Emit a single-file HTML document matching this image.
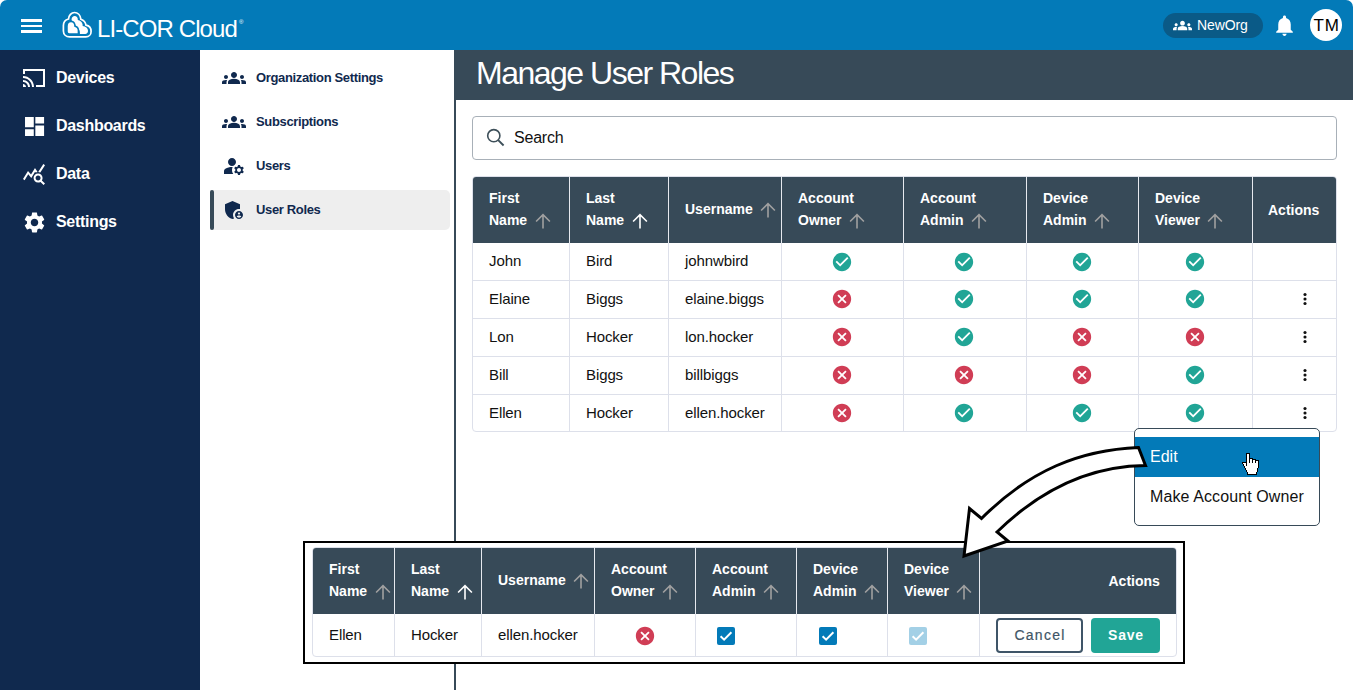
<!DOCTYPE html>
<html><head><meta charset="utf-8">
<style>
*{box-sizing:border-box;margin:0;padding:0}
html,body{width:1353px;height:690px;overflow:hidden;background:#fff;font-family:"Liberation Sans",sans-serif}
.a{position:absolute;display:block}
.t{position:absolute;white-space:nowrap}
.nv{position:absolute;left:56px;color:#fff;font-weight:bold;font-size:16px;line-height:20px;letter-spacing:-0.3px}
.si{position:absolute;left:256px;color:#10294e;font-weight:bold;font-size:13px;line-height:20px;letter-spacing:-0.35px}
.th{position:absolute;color:#fff;font-weight:bold;font-size:14px;line-height:22.5px;white-space:nowrap}
.td{position:absolute;color:#111;font-size:15px;line-height:38px;white-space:nowrap;letter-spacing:-0.1px}
</style></head>
<body>

<div class="a" style="left:0;top:0;width:1353px;height:50px;background:#037ab8;border-radius:7px 7px 0 0"></div>
<div class="a" style="left:21px;top:19px;width:21px;height:2.6px;background:#fff"></div>
<div class="a" style="left:21px;top:24.6px;width:21px;height:2.6px;background:#fff"></div>
<div class="a" style="left:21px;top:30.2px;width:21px;height:2.6px;background:#fff"></div>
<svg class="a" style="left:58px;top:8px" width="40" height="34" viewBox="0 0 40 34">
<path d="M11.6 28.9H27.8C31 28.9 33.1 26.4 33.1 23.4 33.1 20.4 31 17.8 28 17.2 27.6 14.6 25.6 12.3 22.9 11.3 22.4 7.3 19.7 4.5 16.6 4.5 13.3 4.5 10.8 7.5 10.5 11 7.5 11.8 5.4 14.4 5.4 17.6V23C5.4 26.4 8 28.9 11.6 28.9Z" fill="none" stroke="#fff" stroke-width="1.7"/>
<path fill="#fff" d="M13.6 11.3C13.6 9.4 15 8 16.7 8 18.5 8 19.8 9.5 19.8 11.3 19.8 11.6 19.8 11.9 19.7 12.1 22.2 12.3 24.2 14.1 24.6 16.6 24.7 17.1 24.7 17.5 24.6 18 27.6 18.2 30 20.3 30 23 30 24.6 28.8 25.9 27.2 25.9H21.9C21.9 25.9 22 23.7 21.3 22 20.5 20 19 19.3 18 19 17.6 16.1 16 14 13.6 12.3Z"/>
<path fill="#fff" stroke="#037ab8" stroke-width="1.5" d="M9 18.2C9 15.6 10.7 13.5 13 13.5 15.3 13.5 16.9 15.6 17 18.2 18.9 18.5 20.4 20.3 20.4 22.6V25.9H11.3C10 25.9 9 24.9 9 23.6Z"/>
</svg>
<div class="t" style="left:97px;top:15px;font-size:24px;line-height:28px;color:#fff;letter-spacing:-0.9px">LI-COR Cloud</div>
<div class="t" style="left:239px;top:19px;font-size:6px;line-height:7px;color:#fff">&reg;</div>
<div class="a" style="left:1163px;top:13px;width:100px;height:24.5px;background:#0a5a87;border-radius:13px"></div>
<svg class="a" style="left:1173.3px;top:15.6px" width="19" height="19" viewBox="0 0 24 24"><path fill="#fff" d="M12 12.75c1.63 0 3.07.39 4.24.9 1.08.48 1.76 1.56 1.76 2.73V18H6v-1.61c0-1.18.68-2.26 1.76-2.73 1.17-.52 2.61-.91 4.24-.91zM4 13c1.1 0 2-.9 2-2s-.9-2-2-2-2 .9-2 2 .9 2 2 2zm1.13 1.1c-.37-.06-.74-.1-1.130-.1-.99 0-1.93.21-2.78.58C.48 14.9 0 15.62 0 16.43V18h4.5v-1.610c0-.83.23-1.61.63-2.29zM20 13c1.1 0 2-.9 2-2s-.9-2-2-2-2 .9-2 2 .9 2 2 2zm4 3.43c0-.81-.48-1.53-1.22-1.85-.85-.37-1.79-.58-2.78-.58-.39 0-.76.04-1.13.1.4.68.63 1.46.63 2.29V18H24v-1.57zM12 6c1.66 0 3 1.34 3 3s-1.34 3-3 3-3-1.34-3-3 1.34-3 3-3z"/></svg>
<div class="t" style="left:1197px;top:16px;font-size:14px;line-height:18px;color:#fff;letter-spacing:-0.1px">NewOrg</div>
<svg class="a" style="left:1272px;top:12.5px" width="25" height="25" viewBox="0 0 24 24"><path fill="#fff" d="M12 22c1.1 0 2-.9 2-2h-4c0 1.1.89 2 2 2zm6-6v-5c0-3.07-1.64-5.64-4.5-6.32V4c0-.83-.67-1.5-1.5-1.5s-1.5.67-1.5 1.5v.68C7.63 5.36 6 7.92 6 11v5l-2 2v1h16v-1l-2-2z"/></svg>
<div class="a" style="left:1310px;top:8.5px;width:32px;height:32px;border-radius:50%;background:#fff"></div>
<div class="t" style="left:1313.5px;top:15px;font-size:17px;line-height:22px;color:#000;letter-spacing:0.9px">TM</div>
<div class="a" style="left:0;top:50px;width:200px;height:640px;background:#10294e"></div>
<svg class="a" style="left:21.6px;top:66px" width="24" height="24" viewBox="0 0 24 24"><path fill="#fff" d="M23 3H1v5h2V5h18v14h-7v2h9V3zM1 18v3h3c0-1.66-1.34-3-3-3zm0-4v2c2.76 0 5 2.24 5 5h2c0-3.870-3.13-7-7-7zm0-4v2c4.97 0 9 4.03 9 9h2c0-6.08-4.93-11-11-11z"/></svg>
<svg class="a" style="left:21.5px;top:114px" width="25" height="25" viewBox="0 0 24 24"><path fill="#fff" d="M2.9 12.7h8.4V2.8H2.9zm0 8.5h8.4v-6.6H2.9zm9.9 0h8.4V11h-8.4zm0-18.4v6.4h8.4V2.8z"/></svg>
<svg class="a" style="left:21.9px;top:162.4px" width="24" height="24" viewBox="0 0 24 24"><path fill="#fff" d="M19.88,18.47c0.44-0.7,0.7-1.51,0.7-2.39c0-2.49-2.01-4.5-4.5-4.5s-4.5,2.01-4.5,4.5s2.01,4.5,4.49,4.5c0.88,0,1.7-0.26,2.39-0.7L21.58,23L23,21.58L19.88,18.47z M16.08,18.58c-1.38,0-2.5-1.12-2.5-2.5c0-1.38,1.12-2.5,2.5-2.5s2.5,1.12,2.5,2.5C18.58,17.46,17.46,18.58,16.08,18.58z M15.72,10.08c-0.74,0.02-1.45,0.18-2.1,0.45l-0.55-0.83l-3.8,6.18l-3.01-3.52l-3.63,5.81L1,17l5-8l3,3.5L13,6C13,6,15.72,10.08,15.72,10.08z M18.31,10.58c-0.64-0.28-1.33-0.45-2.05-0.49c0,0,5.12-8.09,5.12-8.09L23,3.18L18.31,10.58z"/></svg>
<svg class="a" style="left:21.5px;top:209.5px" width="25" height="25" viewBox="0 0 24 24"><path fill="#fff" d="M19.14,12.94c0.04-0.3,0.06-0.61,0.06-0.94c0-0.32-0.02-0.64-0.07-0.94l2.03-1.58c0.18-0.14,0.23-0.41,0.12-0.61 l-1.92-3.32c-0.12-0.22-0.37-0.29-0.59-0.22l-2.39,0.96c-0.5-0.38-1.03-0.7-1.62-0.94L14.4,2.81c-0.04-0.24-0.24-0.41-0.48-0.41 h-3.84c-0.24,0-0.43,0.17-0.47,0.41L9.25,5.35C8.66,5.590,8.12,5.92,7.63,6.29L5.24,5.33c-0.22-0.08-0.47,0-0.59,0.22L2.74,8.87 C2.62,9.08,2.66,9.34,2.86,9.48l2.03,1.58C4.84,11.36,4.8,11.69,4.8,12s0.02,0.64,0.07,0.94l-2.03,1.58 c-0.18,0.14-0.23,0.41-0.12,0.61l1.92,3.32c0.12,0.22,0.37,0.29,0.59,0.22l2.39-0.96c0.5,0.38,1.03,0.7,1.62,0.94l0.36,2.54 c0.05,0.24,0.24,0.41,0.48,0.41h3.84c0.24,0,0.44-0.17,0.47-0.41l0.36-2.54c0.59-0.24,1.13-0.56,1.62-0.94l2.39,0.96 c0.22,0.08,0.47,0,0.59-0.22l1.92-3.32c0.12-0.22,0.07-0.47-0.12-0.61L19.14,12.94z M12,15.6c-1.98,0-3.6-1.62-3.6-3.6 s1.62-3.6,3.6-3.6s3.6,1.62,3.6,3.6S13.98,15.6,12,15.6z"/></svg>
<div class="nv" style="top:68px">Devices</div>
<div class="nv" style="top:116px">Dashboards</div>
<div class="nv" style="top:164px">Data</div>
<div class="nv" style="top:212px">Settings</div>
<div class="a" style="left:210px;top:190px;width:240px;height:40px;background:#eeeeee;border-radius:0 5px 5px 0"></div>
<div class="a" style="left:210px;top:190px;width:3.5px;height:40px;background:#374a58;border-radius:2px"></div>
<svg class="a" style="left:222px;top:66px" width="24" height="24" viewBox="0 0 24 24"><path fill="#10294e" d="M12 12.75c1.63 0 3.07.39 4.24.9 1.08.48 1.76 1.56 1.76 2.73V18H6v-1.61c0-1.18.68-2.26 1.76-2.73 1.17-.52 2.61-.91 4.24-.91zM4 13c1.1 0 2-.9 2-2s-.9-2-2-2-2 .9-2 2 .9 2 2 2zm1.13 1.1c-.37-.06-.74-.1-1.13-.1-.99 0-1.93.21-2.78.58C.48 14.9 0 15.62 0 16.43V18h4.5v-1.61c0-.83.23-1.61.63-2.29zM20 13c1.1 0 2-.9 2-2s-.9-2-2-2-2 .9-2 2 .9 2 2 2zm4 3.43c0-.81-.48-1.53-1.22-1.85-.85-.37-1.790-.58-2.78-.58-.39 0-.76.04-1.13.1.4.68.63 1.46.63 2.29V18H24v-1.57zM12 6c1.66 0 3 1.34 3 3s-1.34 3-3 3-3-1.34-3-3 1.34-3 3-3z"/></svg>
<svg class="a" style="left:222px;top:110px" width="24" height="24" viewBox="0 0 24 24"><path fill="#10294e" d="M12 12.75c1.63 0 3.07.39 4.24.9 1.08.48 1.76 1.56 1.76 2.73V18H6v-1.61c0-1.18.68-2.26 1.76-2.73 1.17-.52 2.61-.91 4.24-.91zM4 13c1.1 0 2-.9 2-2s-.9-2-2-2-2 .9-2 2 .9 2 2 2zm1.13 1.1c-.37-.06-.74-.1-1.13-.1-.99 0-1.93.21-2.78.58C.48 14.9 0 15.62 0 16.43V18h4.5v-1.61c0-.83.23-1.61.63-2.29zM20 13c1.1 0 2-.9 2-2s-.9-2-2-2-2 .9-2 2 .9 2 2 2zm4 3.43c0-.81-.48-1.53-1.22-1.85-.85-.37-1.790-.58-2.78-.58-.39 0-.76.04-1.13.1.4.68.63 1.46.63 2.29V18H24v-1.57zM12 6c1.66 0 3 1.34 3 3s-1.34 3-3 3-3-1.34-3-3 1.34-3 3-3z"/></svg>
<svg class="a" style="left:222px;top:154px" width="24" height="24" viewBox="0 0 24 24"><path fill="#10294e" d="M10,12c2.21,0,4-1.79,4-4s-1.79-4-4-4S6,5.79,6,8S7.79,12,10,12z M10.67,13.02C10.45,13.01,10.23,13,10,13c-2.42,0-4.68,0.67-6.61,1.82C2.51,15.34,2,16.32,2,17.35V20h9.26C10.47,18.87,10,17.49,10,16C10,14.93,10.25,13.93,10.67,13.02z M20.75,16c0-0.22-0.03-0.42-0.06-0.63l1.14-1.01l-1-1.73l-1.45,0.49c-0.32-0.27-0.68-0.48-1.08-0.63L18,11h-2l-0.3,1.490c-0.4,0.15-0.76,0.36-1.08,0.63l-1.45-0.49l-1,1.73l1.14,1.01c-0.03,0.21-0.06,0.41-0.06,0.63s0.03,0.42,0.06,0.63l-1.14,1.01l1,1.73l1.45-0.49c0.32,0.27,0.68,0.48,1.08,0.63L16,21h2l0.3-1.49c0.4-0.15,0.76-0.36,1.08-0.63l1.45,0.49l1-1.73l-1.14-1.01C20.72,16.42,20.75,16.22,20.75,16z M17,18c-1.1,0-2-0.9-2-2s0.9-2,2-2s2,0.9,2,2S18.1,18,17,18z"/></svg>
<svg class="a" style="left:222px;top:198px" width="24" height="24" viewBox="0 0 24 24"><path fill="#10294e" d="M17,11c0.34,0,0.67,0.04,1,0.09V6.27L10.5,3L3,6.27v4.91c0,4.54,3.2,8.79,7.5,9.82c0.55-0.13,1.08-0.32,1.6-0.55 C11.41,19.47,11,18.28,11,17C11,13.69,13.69,11,17,11z M17,13c-2.21,0-4,1.79-4,4c0,2.21,1.79,4,4,4s4-1.79,4-4 C21,14.79,19.21,13,17,13z M17,14.38c0.62,0,1.12,0.51,1.12,1.12s-0.51,1.12-1.12,1.12s-1.12-0.51-1.12-1.12S16.38,14.38,17,14.38z M17,19.75c-0.93,0-1.74-0.46-2.24-1.17c0.05-0.72,1.51-1.08,2.24-1.08s2.190,0.36,2.24,1.08C18.74,19.29,17.93,19.750,17,19.75z"/></svg>
<div class="si" style="top:68px">Organization Settings</div>
<div class="si" style="top:112px">Subscriptions</div>
<div class="si" style="top:156px">Users</div>
<div class="si" style="top:200px">User Roles</div>
<div class="a" style="left:454px;top:50px;width:2px;height:640px;background:#374a58"></div>
<div class="a" style="left:456px;top:50px;width:897px;height:50px;background:#374a58"></div>
<div class="t" style="left:476px;top:54px;font-size:32px;line-height:38px;color:#fff;letter-spacing:-1.5px">Manage User Roles</div>
<div class="a" style="left:472px;top:116px;width:865px;height:44px;border:1px solid #a8b0b8;border-radius:4px"></div>
<svg class="a" style="left:484px;top:126px" width="24" height="24" viewBox="0 0 24 24"><circle cx="9.8" cy="9.7" r="6.1" fill="none" stroke="#3d4f59" stroke-width="1.6"/><path d="M14.2 14.1L19.6 19.5" stroke="#3d4f59" stroke-width="1.9"/></svg>
<div class="t" style="left:514px;top:127.5px;font-size:16px;line-height:20px;color:#111;letter-spacing:-0.2px">Search</div>
<div class="a" style="left:472px;top:176px;width:865px;height:256px;border:1px solid #dde0ea;border-radius:4px;overflow:hidden"><div class="a" style="left:-1px;top:-1px;width:865px;height:67px;background:#374a58"></div></div>
<div class="a" style="left:569px;top:176px;width:1px;height:67px;background:#e6e9ee"></div>
<div class="a" style="left:569px;top:243px;width:1px;height:189px;background:#dde0ea"></div>
<div class="a" style="left:668px;top:176px;width:1px;height:67px;background:#e6e9ee"></div>
<div class="a" style="left:668px;top:243px;width:1px;height:189px;background:#dde0ea"></div>
<div class="a" style="left:781px;top:176px;width:1px;height:67px;background:#e6e9ee"></div>
<div class="a" style="left:781px;top:243px;width:1px;height:189px;background:#dde0ea"></div>
<div class="a" style="left:903px;top:176px;width:1px;height:67px;background:#e6e9ee"></div>
<div class="a" style="left:903px;top:243px;width:1px;height:189px;background:#dde0ea"></div>
<div class="a" style="left:1026px;top:176px;width:1px;height:67px;background:#e6e9ee"></div>
<div class="a" style="left:1026px;top:243px;width:1px;height:189px;background:#dde0ea"></div>
<div class="a" style="left:1138px;top:176px;width:1px;height:67px;background:#e6e9ee"></div>
<div class="a" style="left:1138px;top:243px;width:1px;height:189px;background:#dde0ea"></div>
<div class="a" style="left:1252px;top:176px;width:1px;height:67px;background:#e6e9ee"></div>
<div class="a" style="left:1252px;top:243px;width:1px;height:189px;background:#dde0ea"></div>
<div class="a" style="left:472px;top:280px;width:865px;height:1px;background:#dde0ea"></div>
<div class="a" style="left:472px;top:318px;width:865px;height:1px;background:#dde0ea"></div>
<div class="a" style="left:472px;top:356px;width:865px;height:1px;background:#dde0ea"></div>
<div class="a" style="left:472px;top:394px;width:865px;height:1px;background:#dde0ea"></div>
<div class="th" style="left:489px;top:186.5px">First<br>Name</div>
<svg class="a" style="left:534.625px;top:212.8px" width="16" height="16" viewBox="0 0 16 16"><path d="M8 15.4V2M1.1 8.5L8 1.6l6.9 6.9" stroke="#a0a0a0" stroke-width="1.6" fill="none"/></svg>
<div class="th" style="left:586px;top:186.5px">Last<br>Name</div>
<svg class="a" style="left:631.625px;top:212.8px" width="16" height="16" viewBox="0 0 16 16"><path d="M8 15.4V2M1.1 8.5L8 1.6l6.9 6.9" stroke="#fff" stroke-width="1.6" fill="none"/></svg>
<div class="th" style="left:685px;top:197.75px">Username</div>
<svg class="a" style="left:760.1875px;top:201.8px" width="16" height="16" viewBox="0 0 16 16"><path d="M8 15.4V2M1.1 8.5L8 1.6l6.9 6.9" stroke="#a0a0a0" stroke-width="1.6" fill="none"/></svg>
<div class="th" style="left:798px;top:186.5px">Account<br>Owner</div>
<svg class="a" style="left:849.0625px;top:212.8px" width="16" height="16" viewBox="0 0 16 16"><path d="M8 15.4V2M1.1 8.5L8 1.6l6.9 6.9" stroke="#a0a0a0" stroke-width="1.6" fill="none"/></svg>
<div class="th" style="left:920px;top:186.5px">Account<br>Admin</div>
<svg class="a" style="left:971.046875px;top:212.8px" width="16" height="16" viewBox="0 0 16 16"><path d="M8 15.4V2M1.1 8.5L8 1.6l6.9 6.9" stroke="#a0a0a0" stroke-width="1.6" fill="none"/></svg>
<div class="th" style="left:1043px;top:186.5px">Device<br>Admin</div>
<svg class="a" style="left:1094.046875px;top:212.8px" width="16" height="16" viewBox="0 0 16 16"><path d="M8 15.4V2M1.1 8.5L8 1.6l6.9 6.9" stroke="#a0a0a0" stroke-width="1.6" fill="none"/></svg>
<div class="th" style="left:1155px;top:186.5px">Device<br>Viewer</div>
<svg class="a" style="left:1207.390625px;top:212.8px" width="16" height="16" viewBox="0 0 16 16"><path d="M8 15.4V2M1.1 8.5L8 1.6l6.9 6.9" stroke="#a0a0a0" stroke-width="1.6" fill="none"/></svg>
<div class="th" style="left:1268px;top:198.75px">Actions</div>
<div class="td" style="left:489px;top:242px">John</div>
<div class="td" style="left:586px;top:242px">Bird</div>
<div class="td" style="left:685px;top:242px">johnwbird</div>
<svg class="a" style="left:830.8px;top:251px" width="22" height="22" viewBox="0 0 24 24"><path fill="#21a596" d="M12 2C6.48 2 2 6.48 2 12s4.48 10 10 10 10-4.48 10-10S17.52 2 12 2zm-2 15l-5-5 1.41-1.41L10 14.17l7.59-7.59L19 8l-9 9z"/></svg>
<svg class="a" style="left:953.3px;top:251px" width="22" height="22" viewBox="0 0 24 24"><path fill="#21a596" d="M12 2C6.48 2 2 6.48 2 12s4.48 10 10 10 10-4.48 10-10S17.52 2 12 2zm-2 15l-5-5 1.41-1.41L10 14.17l7.59-7.59L19 8l-9 9z"/></svg>
<svg class="a" style="left:1070.8px;top:251px" width="22" height="22" viewBox="0 0 24 24"><path fill="#21a596" d="M12 2C6.48 2 2 6.48 2 12s4.48 10 10 10 10-4.48 10-10S17.52 2 12 2zm-2 15l-5-5 1.41-1.41L10 14.17l7.59-7.59L19 8l-9 9z"/></svg>
<svg class="a" style="left:1183.8px;top:251px" width="22" height="22" viewBox="0 0 24 24"><path fill="#21a596" d="M12 2C6.48 2 2 6.48 2 12s4.48 10 10 10 10-4.48 10-10S17.52 2 12 2zm-2 15l-5-5 1.41-1.41L10 14.17l7.59-7.59L19 8l-9 9z"/></svg>
<div class="td" style="left:489px;top:280px">Elaine</div>
<div class="td" style="left:586px;top:280px">Biggs</div>
<div class="td" style="left:685px;top:280px">elaine.biggs</div>
<svg class="a" style="left:830.8px;top:288px" width="22" height="22" viewBox="0 0 24 24"><path fill="#d03d55" d="M12 2C6.47 2 2 6.47 2 12s4.47 10 10 10 10-4.47 10-10S17.53 2 12 2zm5 13.59L15.59 17 12 13.41 8.41 17 7 15.59 10.59 12 7 8.41 8.41 7 12 10.59 15.59 7 17 8.41 13.41 12 17 15.59z"/></svg>
<svg class="a" style="left:953.3px;top:288px" width="22" height="22" viewBox="0 0 24 24"><path fill="#21a596" d="M12 2C6.48 2 2 6.48 2 12s4.48 10 10 10 10-4.48 10-10S17.52 2 12 2zm-2 15l-5-5 1.41-1.41L10 14.17l7.59-7.59L19 8l-9 9z"/></svg>
<svg class="a" style="left:1070.8px;top:288px" width="22" height="22" viewBox="0 0 24 24"><path fill="#21a596" d="M12 2C6.48 2 2 6.48 2 12s4.48 10 10 10 10-4.48 10-10S17.52 2 12 2zm-2 15l-5-5 1.41-1.41L10 14.17l7.59-7.59L19 8l-9 9z"/></svg>
<svg class="a" style="left:1183.8px;top:288px" width="22" height="22" viewBox="0 0 24 24"><path fill="#21a596" d="M12 2C6.48 2 2 6.48 2 12s4.48 10 10 10 10-4.48 10-10S17.52 2 12 2zm-2 15l-5-5 1.41-1.41L10 14.17l7.59-7.59L19 8l-9 9z"/></svg>
<svg class="a" style="left:1302px;top:292px" width="6" height="14" viewBox="0 0 6 14"><circle cx="3" cy="2.5" r="1.55" fill="#111"/><circle cx="3" cy="7" r="1.55" fill="#111"/><circle cx="3" cy="11.5" r="1.55" fill="#111"/></svg>
<div class="td" style="left:489px;top:318px">Lon</div>
<div class="td" style="left:586px;top:318px">Hocker</div>
<div class="td" style="left:685px;top:318px">lon.hocker</div>
<svg class="a" style="left:830.8px;top:326px" width="22" height="22" viewBox="0 0 24 24"><path fill="#d03d55" d="M12 2C6.47 2 2 6.47 2 12s4.47 10 10 10 10-4.47 10-10S17.53 2 12 2zm5 13.59L15.59 17 12 13.41 8.41 17 7 15.59 10.59 12 7 8.41 8.41 7 12 10.59 15.59 7 17 8.41 13.41 12 17 15.59z"/></svg>
<svg class="a" style="left:953.3px;top:326px" width="22" height="22" viewBox="0 0 24 24"><path fill="#21a596" d="M12 2C6.48 2 2 6.48 2 12s4.48 10 10 10 10-4.48 10-10S17.52 2 12 2zm-2 15l-5-5 1.41-1.41L10 14.17l7.59-7.59L19 8l-9 9z"/></svg>
<svg class="a" style="left:1070.8px;top:326px" width="22" height="22" viewBox="0 0 24 24"><path fill="#d03d55" d="M12 2C6.47 2 2 6.47 2 12s4.47 10 10 10 10-4.47 10-10S17.53 2 12 2zm5 13.59L15.59 17 12 13.41 8.41 17 7 15.59 10.59 12 7 8.41 8.41 7 12 10.59 15.59 7 17 8.41 13.41 12 17 15.59z"/></svg>
<svg class="a" style="left:1183.8px;top:326px" width="22" height="22" viewBox="0 0 24 24"><path fill="#d03d55" d="M12 2C6.47 2 2 6.47 2 12s4.47 10 10 10 10-4.47 10-10S17.53 2 12 2zm5 13.59L15.59 17 12 13.41 8.41 17 7 15.59 10.59 12 7 8.41 8.41 7 12 10.59 15.59 7 17 8.41 13.41 12 17 15.59z"/></svg>
<svg class="a" style="left:1302px;top:330px" width="6" height="14" viewBox="0 0 6 14"><circle cx="3" cy="2.5" r="1.55" fill="#111"/><circle cx="3" cy="7" r="1.55" fill="#111"/><circle cx="3" cy="11.5" r="1.55" fill="#111"/></svg>
<div class="td" style="left:489px;top:356px">Bill</div>
<div class="td" style="left:586px;top:356px">Biggs</div>
<div class="td" style="left:685px;top:356px">billbiggs</div>
<svg class="a" style="left:830.8px;top:364px" width="22" height="22" viewBox="0 0 24 24"><path fill="#d03d55" d="M12 2C6.47 2 2 6.47 2 12s4.47 10 10 10 10-4.47 10-10S17.53 2 12 2zm5 13.59L15.59 17 12 13.41 8.41 17 7 15.59 10.59 12 7 8.41 8.41 7 12 10.59 15.59 7 17 8.41 13.41 12 17 15.59z"/></svg>
<svg class="a" style="left:953.3px;top:364px" width="22" height="22" viewBox="0 0 24 24"><path fill="#d03d55" d="M12 2C6.47 2 2 6.47 2 12s4.47 10 10 10 10-4.47 10-10S17.53 2 12 2zm5 13.59L15.59 17 12 13.41 8.41 17 7 15.59 10.59 12 7 8.41 8.41 7 12 10.59 15.59 7 17 8.41 13.41 12 17 15.59z"/></svg>
<svg class="a" style="left:1070.8px;top:364px" width="22" height="22" viewBox="0 0 24 24"><path fill="#d03d55" d="M12 2C6.47 2 2 6.47 2 12s4.47 10 10 10 10-4.47 10-10S17.53 2 12 2zm5 13.59L15.59 17 12 13.41 8.41 17 7 15.59 10.59 12 7 8.41 8.41 7 12 10.59 15.59 7 17 8.41 13.41 12 17 15.59z"/></svg>
<svg class="a" style="left:1183.8px;top:364px" width="22" height="22" viewBox="0 0 24 24"><path fill="#21a596" d="M12 2C6.48 2 2 6.48 2 12s4.48 10 10 10 10-4.48 10-10S17.52 2 12 2zm-2 15l-5-5 1.41-1.41L10 14.17l7.59-7.59L19 8l-9 9z"/></svg>
<svg class="a" style="left:1302px;top:368px" width="6" height="14" viewBox="0 0 6 14"><circle cx="3" cy="2.5" r="1.55" fill="#111"/><circle cx="3" cy="7" r="1.55" fill="#111"/><circle cx="3" cy="11.5" r="1.55" fill="#111"/></svg>
<div class="td" style="left:489px;top:394px">Ellen</div>
<div class="td" style="left:586px;top:394px">Hocker</div>
<div class="td" style="left:685px;top:394px">ellen.hocker</div>
<svg class="a" style="left:830.8px;top:402px" width="22" height="22" viewBox="0 0 24 24"><path fill="#d03d55" d="M12 2C6.47 2 2 6.47 2 12s4.47 10 10 10 10-4.47 10-10S17.53 2 12 2zm5 13.59L15.59 17 12 13.41 8.41 17 7 15.59 10.59 12 7 8.41 8.41 7 12 10.59 15.59 7 17 8.41 13.41 12 17 15.59z"/></svg>
<svg class="a" style="left:953.3px;top:402px" width="22" height="22" viewBox="0 0 24 24"><path fill="#21a596" d="M12 2C6.48 2 2 6.48 2 12s4.48 10 10 10 10-4.48 10-10S17.52 2 12 2zm-2 15l-5-5 1.41-1.41L10 14.17l7.59-7.59L19 8l-9 9z"/></svg>
<svg class="a" style="left:1070.8px;top:402px" width="22" height="22" viewBox="0 0 24 24"><path fill="#21a596" d="M12 2C6.48 2 2 6.48 2 12s4.48 10 10 10 10-4.48 10-10S17.52 2 12 2zm-2 15l-5-5 1.41-1.41L10 14.17l7.59-7.59L19 8l-9 9z"/></svg>
<svg class="a" style="left:1183.8px;top:402px" width="22" height="22" viewBox="0 0 24 24"><path fill="#21a596" d="M12 2C6.48 2 2 6.48 2 12s4.48 10 10 10 10-4.48 10-10S17.52 2 12 2zm-2 15l-5-5 1.41-1.41L10 14.17l7.59-7.59L19 8l-9 9z"/></svg>
<svg class="a" style="left:1302px;top:406px" width="6" height="14" viewBox="0 0 6 14"><circle cx="3" cy="2.5" r="1.55" fill="#111"/><circle cx="3" cy="7" r="1.55" fill="#111"/><circle cx="3" cy="11.5" r="1.55" fill="#111"/></svg>
<div class="a" style="left:1134px;top:428px;width:186px;height:98px;background:#fff;border:1px solid #374a58;border-radius:5px;overflow:hidden"><div class="a" style="left:0;top:8px;width:184px;height:40px;background:#037ab8"></div></div>
<div class="t" style="left:1150px;top:447px;font-size:16px;line-height:20px;color:#fff">Edit</div>
<div class="t" style="left:1150px;top:487px;font-size:16px;line-height:20px;color:#111;letter-spacing:0.1px">Make Account Owner</div>
<div class="a" style="left:303px;top:541px;width:882px;height:123px;background:#fff;border:2.4px solid #000"></div>
<div class="a" style="left:312px;top:547px;width:865px;height:110px;border:1px solid #dde0ea;border-radius:4px;overflow:hidden"><div class="a" style="left:-1px;top:-1px;width:865px;height:67px;background:#374a58"></div></div>
<div class="a" style="left:394px;top:547px;width:1px;height:67px;background:#e6e9ee"></div>
<div class="a" style="left:394px;top:614px;width:1px;height:43px;background:#dde0ea"></div>
<div class="a" style="left:481px;top:547px;width:1px;height:67px;background:#e6e9ee"></div>
<div class="a" style="left:481px;top:614px;width:1px;height:43px;background:#dde0ea"></div>
<div class="a" style="left:594px;top:547px;width:1px;height:67px;background:#e6e9ee"></div>
<div class="a" style="left:594px;top:614px;width:1px;height:43px;background:#dde0ea"></div>
<div class="a" style="left:695px;top:547px;width:1px;height:67px;background:#e6e9ee"></div>
<div class="a" style="left:695px;top:614px;width:1px;height:43px;background:#dde0ea"></div>
<div class="a" style="left:796px;top:547px;width:1px;height:67px;background:#e6e9ee"></div>
<div class="a" style="left:796px;top:614px;width:1px;height:43px;background:#dde0ea"></div>
<div class="a" style="left:887px;top:547px;width:1px;height:67px;background:#e6e9ee"></div>
<div class="a" style="left:887px;top:614px;width:1px;height:43px;background:#dde0ea"></div>
<div class="a" style="left:979px;top:547px;width:1px;height:67px;background:#e6e9ee"></div>
<div class="a" style="left:979px;top:614px;width:1px;height:43px;background:#dde0ea"></div>
<div class="th" style="left:329px;top:557.5px">First<br>Name</div>
<svg class="a" style="left:374.625px;top:583.8px" width="16" height="16" viewBox="0 0 16 16"><path d="M8 15.4V2M1.1 8.5L8 1.6l6.9 6.9" stroke="#a0a0a0" stroke-width="1.6" fill="none"/></svg>
<div class="th" style="left:411px;top:557.5px">Last<br>Name</div>
<svg class="a" style="left:456.625px;top:583.8px" width="16" height="16" viewBox="0 0 16 16"><path d="M8 15.4V2M1.1 8.5L8 1.6l6.9 6.9" stroke="#fff" stroke-width="1.6" fill="none"/></svg>
<div class="th" style="left:498px;top:568.75px">Username</div>
<svg class="a" style="left:573.1875px;top:572.8px" width="16" height="16" viewBox="0 0 16 16"><path d="M8 15.4V2M1.1 8.5L8 1.6l6.9 6.9" stroke="#a0a0a0" stroke-width="1.6" fill="none"/></svg>
<div class="th" style="left:611px;top:557.5px">Account<br>Owner</div>
<svg class="a" style="left:662.0625px;top:583.8px" width="16" height="16" viewBox="0 0 16 16"><path d="M8 15.4V2M1.1 8.5L8 1.6l6.9 6.9" stroke="#a0a0a0" stroke-width="1.6" fill="none"/></svg>
<div class="th" style="left:712px;top:557.5px">Account<br>Admin</div>
<svg class="a" style="left:763.046875px;top:583.8px" width="16" height="16" viewBox="0 0 16 16"><path d="M8 15.4V2M1.1 8.5L8 1.6l6.9 6.9" stroke="#a0a0a0" stroke-width="1.6" fill="none"/></svg>
<div class="th" style="left:813px;top:557.5px">Device<br>Admin</div>
<svg class="a" style="left:864.046875px;top:583.8px" width="16" height="16" viewBox="0 0 16 16"><path d="M8 15.4V2M1.1 8.5L8 1.6l6.9 6.9" stroke="#a0a0a0" stroke-width="1.6" fill="none"/></svg>
<div class="th" style="left:904px;top:557.5px">Device<br>Viewer</div>
<svg class="a" style="left:956.390625px;top:583.8px" width="16" height="16" viewBox="0 0 16 16"><path d="M8 15.4V2M1.1 8.5L8 1.6l6.9 6.9" stroke="#a0a0a0" stroke-width="1.6" fill="none"/></svg>
<div class="th" style="left:1108.5px;top:569.75px">Actions</div>
<div class="td" style="left:329px;top:614px;line-height:42px">Ellen</div>
<div class="td" style="left:411px;top:614px;line-height:42px">Hocker</div>
<div class="td" style="left:498px;top:614px;line-height:42px">ellen.hocker</div>
<svg class="a" style="left:634px;top:625px" width="22" height="22" viewBox="0 0 24 24"><path fill="#d03d55" d="M12 2C6.47 2 2 6.47 2 12s4.47 10 10 10 10-4.47 10-10S17.53 2 12 2zm5 13.59L15.59 17 12 13.41 8.41 17 7 15.59 10.59 12 7 8.41 8.41 7 12 10.59 15.59 7 17 8.41 13.41 12 17 15.59z"/></svg>
<svg class="a" style="left:717px;top:627px" width="18" height="18" viewBox="0 0 18 18"><rect x="0" y="0" width="18" height="18" rx="2" fill="#037ab8"/><path d="M3.6 9.2l3.5 3.4 7.3-7.3" stroke="#fff" stroke-width="2" fill="none"/></svg>
<svg class="a" style="left:818.5px;top:627px" width="18" height="18" viewBox="0 0 18 18"><rect x="0" y="0" width="18" height="18" rx="2" fill="#037ab8"/><path d="M3.6 9.2l3.5 3.4 7.3-7.3" stroke="#fff" stroke-width="2" fill="none"/></svg>
<svg class="a" style="left:909px;top:627px" width="18" height="18" viewBox="0 0 18 18"><rect x="0" y="0" width="18" height="18" rx="2" fill="#a3d0e6"/><path d="M3.6 9.2l3.5 3.4 7.3-7.3" stroke="#fff" stroke-width="2" fill="none"/></svg>
<div class="a" style="left:996px;top:618px;width:87px;height:35px;border:2px solid #3f5568;border-radius:4px;background:#fff"></div>
<div class="t" style="left:997px;top:617.5px;width:86px;line-height:35px;text-align:center;font-size:14px;color:#405566;letter-spacing:1.25px;-webkit-text-stroke:0.2px #405566">Cancel</div>
<div class="a" style="left:1091px;top:618px;width:69px;height:35px;border-radius:4px;background:#21a596"></div>
<div class="t" style="left:1091.5px;top:617.5px;width:69px;line-height:35px;text-align:center;font-size:14px;color:#fff;letter-spacing:0.8px;font-weight:bold">Save</div>
<svg class="a" style="left:0;top:0" width="1353" height="690" viewBox="0 0 1353 690">
<path d="M1138.5 447.5 L1145.5 465.5 C1090 466 1040 490 997 532 L1008 541 L964 556 L969.5 508.5 L981.5 518.5 C1030 470 1080 450 1138.5 447.5 Z" fill="#fff" stroke="#000" stroke-width="3" stroke-linejoin="miter"/>
</svg>
<svg class="a" style="left:1242px;top:453px" width="17" height="22" viewBox="0 0 17 22" shape-rendering="crispEdges">
<path fill="#000" d="M4 0H8V5H11V6H14V7H17V15H16V19H15V22H5V19H4V17H3V15H2V13H1V11H0V9H4Z"/>
<path fill="#fff" d="M5 1H7V6H10V7H13V8H16V15H15V19H14V21H6V19H5V17H4V15H3V13H2V11H1V10H4V13H5Z"/>
<path fill="#000" d="M7 6H8V10H7ZM10 7H11V10H10ZM13 8H14V10H13Z"/>
</svg>
</body></html>
